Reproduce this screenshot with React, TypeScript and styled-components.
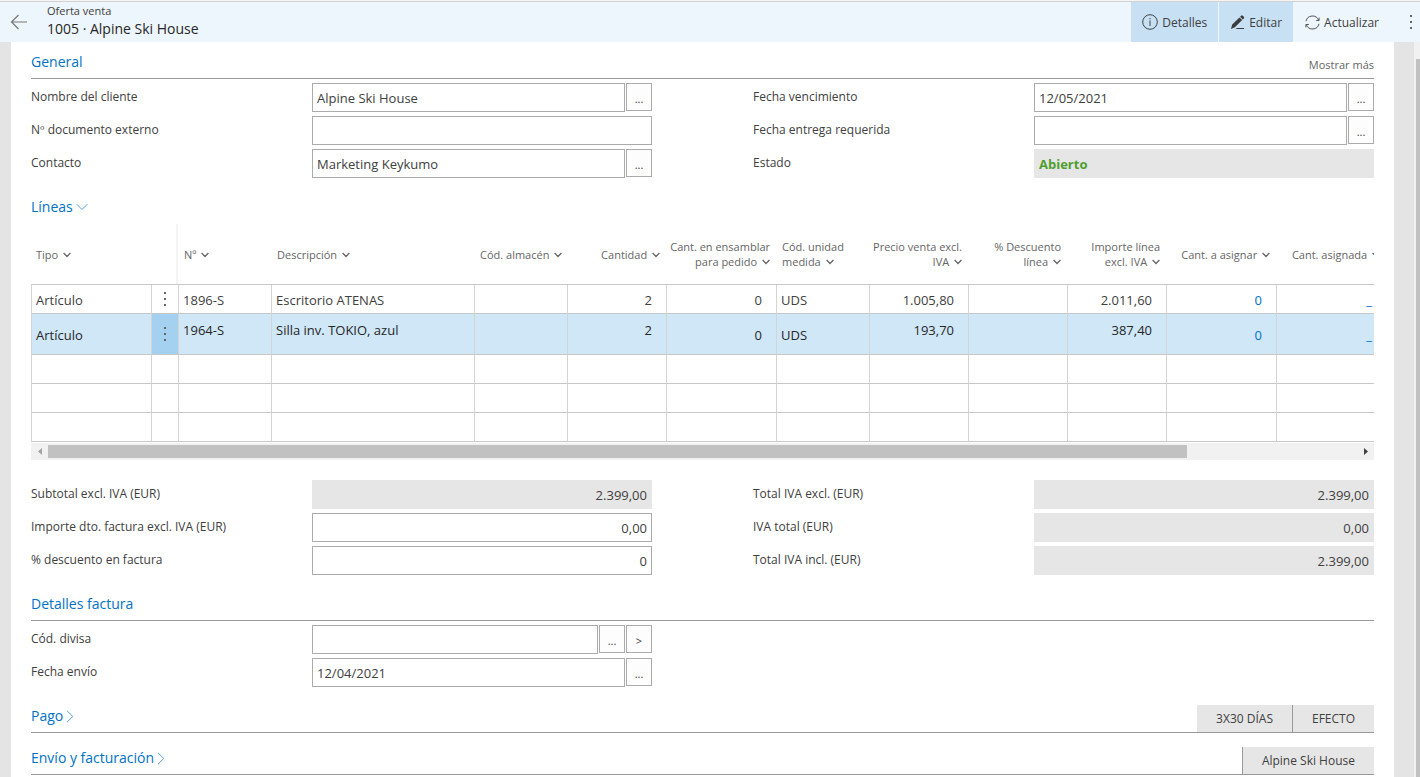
import React, { useId } from "react";
import styled, { createGlobalStyle, css } from "styled-components";

const GlobalStyle = createGlobalStyle`
  *, *::before, *::after { box-sizing: border-box; }
  html, body, #root { height: 100%; }
  body {
    margin: 0;
    overflow: hidden;
    background: #e4e4e4;
    color: #404040;
    font-family: "Open Sans", "Noto Sans", sans-serif;
    font-size: 12px;
    line-height: 16px;
  }
  button, input { font-family: inherit; color: inherit; border-radius: 0; margin: 0; }
  h1, h2, p { margin: 0; font-weight: 400; }
`;

const Screen = styled.div`
  display: flex;
  flex-direction: column;
  height: 100%;
`;

const TopBar = styled.header`
  flex: none;
  display: flex;
  height: 42px;
  padding-top: 1px;
  border-top: 1px solid #f4f4f4;
  background: linear-gradient(#d2d2d2 1px, #eef6fd 1px);
`;

const BackButton = styled.button`
  width: 47px;
  padding: 0 0 0 10px;
  border: 0;
  background: none;
  text-align: left;
  line-height: 0;
`;

const Titles = styled.div`
  flex: 1;
  padding-top: 1px;
`;

const PageKind = styled.p`
  font-size: 11px;
  line-height: 16px;
`;

const PageTitle = styled.h1`
  font-size: 14px;
  line-height: 19px;
  color: #262626;
`;

const ActionButton = styled.button<{ $active?: boolean }>`
  display: flex;
  align-items: center;
  gap: 4px;
  height: 40px;
  padding: 0 11px;
  border: 0;
  border-right: 1px solid #eef6fd;
  background: ${(p) => (p.$active ? "#c7e0f4" : "transparent")};
  font-size: 12px;
`;

const MoreButton = styled.button`
  display: flex;
  align-items: center;
  justify-content: flex-end;
  width: 29px;
  padding: 0 8px 0 0;
  border: 0;
  background: none;
`;

const Workspace = styled.div`
  flex: 1;
  min-height: 0;
  display: flex;
`;

const Sheet = styled.main`
  flex: 1;
  min-width: 0;
  margin: 0 20px 0 11px;
  padding: 0 20px;
  overflow: hidden;
  background: #fff;
`;

const PageScroll = styled.div`
  flex: none;
  width: 6px;
  padding: 17px 0 0 2px;
  background: #f1f1f1;
`;

const PageThumb = styled.div`
  height: 100%;
  background: #c1c1c1;
`;

const SectionHead = styled.div<{ $height: number; $plain?: boolean }>`
  display: flex;
  justify-content: space-between;
  height: ${(p) => p.$height}px;
  border-bottom: ${(p) => (p.$plain ? "0" : "1px solid #999")};
`;

const SectionTitle = styled.h2<{ $top: number }>`
  padding-top: ${(p) => p.$top}px;
  font-size: 14px;
  line-height: 20px;
  color: #0072c6;
`;

const SectionToggle = styled.button`
  display: flex;
  align-items: center;
  gap: 3px;
  padding: 0;
  border: 0;
  background: none;
  font-size: inherit;
  line-height: inherit;
  color: inherit;
`;

const ShowMore = styled.a`
  align-self: flex-end;
  padding-bottom: 5px;
  font-size: 11px;
  line-height: 16px;
  color: #666;
  text-decoration: none;
`;

const Summary = styled.div`
  align-self: flex-end;
  display: flex;
`;

const SummaryTile = styled.span<{ $line?: boolean }>`
  height: 27px;
  padding: 0 19px;
  border-left: ${(p) => (p.$line ? "1px solid #999" : "0")};
  background: #e6e6e6;
  line-height: 27px;
`;

const FieldGrid = styled.div`
  display: grid;
  grid-template-columns: 1fr 1fr;
  column-gap: 101px;
  padding-top: 4px;
`;

const FieldColumn = styled.div`
  display: grid;
  row-gap: 4px;
  align-content: start;
`;

const FieldRow = styled.div`
  display: grid;
  grid-template-columns: 281px 1fr;
  height: 29px;
`;

const FieldLabel = styled.label`
  line-height: 28px;
  white-space: nowrap;
`;

const FieldControls = styled.div`
  display: flex;
  gap: 1px;
  min-width: 0;
`;

const TextBox = styled.input<{ $right?: boolean; $status?: boolean }>`
  flex: 1;
  min-width: 0;
  height: 29px;
  padding: 1px 4px 0;
  border: 1px solid #ababab;
  outline: 0;
  background: #fff;
  font-size: 13px;
  text-align: ${(p) => (p.$right ? "right" : "left")};
  &:read-only {
    border-color: #e6e6e6;
    background: #e6e6e6;
  }
  ${(p) =>
    p.$status &&
    css`
      font-weight: 700;
      color: #509e2f;
    `}
`;

const AssistButton = styled.button`
  flex: none;
  width: 26px;
  height: 28px;
  padding: 3px 0 0;
  border: 1px solid #ababab;
  background: #fdfdfd;
  font-size: 11px;
  line-height: 16px;
`;

const GridFrame = styled.div`
  overflow: hidden;
`;

const LinesTable = styled.table`
  table-layout: fixed;
  width: 1355px;
  border-collapse: separate;
  border-spacing: 0;
`;

const HeadCell = styled.th<{ $right?: boolean; $frozen?: boolean }>`
  height: 61px;
  padding: ${(p) => (p.$right ? "0 6px 0 0" : p.$frozen ? "0 5px" : "0 6px")};
  border-bottom: 1px solid #c8c8c8;
  ${(p) => p.$frozen && "box-shadow: inset -2px 0 #f4f4f4;"}
  font-size: 11px;
  font-weight: 400;
  line-height: 15px;
  color: #666;
  white-space: nowrap;
  text-align: ${(p) => (p.$right ? "right" : "left")};
`;

const HeadButton = styled.button`
  padding: 0;
  border: 0;
  background: none;
  font-size: inherit;
  line-height: inherit;
  text-align: inherit;
  white-space: pre;
`;

const BodyRow = styled.tr<{ $selected?: boolean }>`
  height: ${(p) => (p.$selected ? 41 : 29)}px;
  background: ${(p) => (p.$selected ? "#d0e7f8" : "#fff")};
  color: ${(p) => (p.$selected ? "#262626" : "#404040")};
`;

const BodyCell = styled.td<{ $right?: boolean; $top?: boolean; $menu?: boolean; $on?: boolean }>`
  padding: ${(p) => (p.$menu || p.$top ? 0 : 2)}px ${(p) => (p.$menu ? 0 : p.$right ? 14 : 4)}px 0
    ${(p) => (p.$menu ? 0 : 4)}px;
  border-left: 1px solid #d4d4d4;
  border-bottom: 1px solid #c8c8c8;
  font-size: 13px;
  line-height: 18px;
  white-space: nowrap;
  text-align: ${(p) => (p.$right ? "right" : "left")};
  vertical-align: ${(p) => (p.$top ? "top" : "middle")};
  background: ${(p) => (p.$menu && p.$on ? "#a5d1f1" : "transparent")};
`;

const CellInput = styled.input<{ $right?: boolean }>`
  display: block;
  width: 100%;
  height: 32px;
  padding: 0;
  border: 0;
  outline: 0;
  background: none;
  font-size: 13px;
  text-align: ${(p) => (p.$right ? "right" : "left")};
`;

const RowMenu = styled.button`
  display: flex;
  align-items: center;
  justify-content: center;
  width: 100%;
  height: 24px;
  padding: 0;
  border: 0;
  background: none;
`;

const CellLink = styled.a`
  color: #0072c6;
  text-decoration: none;
`;

const GridScroll = styled.div`
  display: flex;
  align-items: center;
  height: 17px;
  margin-top: 1px;
  background: #f1f1f1;
`;

const ScrollArrow = styled.button`
  flex: none;
  display: flex;
  align-items: center;
  justify-content: center;
  width: 17px;
  height: 17px;
  padding: 0;
  border: 0;
  background: none;
`;

const ScrollLane = styled.div`
  flex: 1;
`;

const GridThumb = styled.div`
  width: 87%;
  height: 13px;
  background: #c1c1c1;
`;

const Spacer = styled.div<{ $size: number }>`
  height: ${(p) => p.$size}px;
`;

const ChevronMark = styled.svg`
  margin-left: 2px;
  vertical-align: 1px;
`;

const HeadChevron = () => (
  <ChevronMark width="8" height="6" viewBox="0 0 8 6" fill="none" stroke="#666" strokeWidth="1.3" aria-hidden="true">
    <path d="M.6 1 4 4.5 7.4 1" />
  </ChevronMark>
);

const DownChevron = () => (
  <svg width="12" height="8" viewBox="0 0 12 8" fill="none" stroke="#5a9fd6" aria-hidden="true">
    <path d="M.5 1 6 6.5 11.5 1" />
  </svg>
);

const RightChevron = () => (
  <svg width="8" height="13" viewBox="0 0 8 13" fill="none" stroke="#5a9fd6" aria-hidden="true">
    <path d="M1 .8 6.8 6.5 1 12.2" />
  </svg>
);

const Dots = () => (
  <svg width="2" height="14" viewBox="0 0 2 14" fill="#666" aria-hidden="true">
    <rect width="2" height="2" />
    <rect y="6" width="2" height="2" />
    <rect y="12" width="2" height="2" />
  </svg>
);

const BackIcon = () => (
  <svg width="17" height="16" viewBox="0 0 17 16" fill="none" stroke="#777" strokeWidth="1.2" aria-hidden="true">
    <path d="M17 8H2M8.5 1 1.5 8l7 7" />
  </svg>
);

const InfoIcon = () => (
  <svg width="16" height="16" viewBox="0 0 16 16" fill="none" stroke="#444" aria-hidden="true">
    <circle cx="8" cy="8" r="7.3" />
    <path d="M8 6.5V12M8 4v1.3" />
  </svg>
);

const PencilIcon = () => (
  <svg width="15" height="15" viewBox="0 0 15 15" fill="#3c3c3c" aria-hidden="true">
    <path d="M11.1.8a1.2 1.2 0 0 1 1.7 0l1 1a1.2 1.2 0 0 1 0 1.700l-1 1-2.700-2.700zM9.500 2.400l2.700 2.700-7.300 7.200-4 1.600 1.300-4.300z" />
    <path d="M7 13h7v1H5.500z" />
  </svg>
);

const RefreshIcon = () => (
  <svg width="15" height="15" viewBox="0 0 15 15" fill="none" stroke="#555" aria-hidden="true">
    <path d="M1 6.200A6.600 6.600 0 0 1 13.600 5.200M14 8.800A6.600 6.600 0 0 1 1.400 9.800" />
    <path d="M14.100 2.600v2.900h-2.900M.9 12.400V9.500h2.900" />
  </svg>
);

type FieldProps = {
  label: string;
  value?: string;
  right?: boolean;
  readOnly?: boolean;
  status?: boolean;
  assists?: string[];
};

function Field({ label, value = "", right, readOnly, status, assists = [] }: FieldProps) {
  const id = useId();
  return (
    <FieldRow>
      <FieldLabel htmlFor={id}>{label}</FieldLabel>
      <FieldControls>
        <TextBox id={id} defaultValue={value} readOnly={readOnly} $right={right} $status={status} />
        {assists.map((mark) => (
          <AssistButton key={mark} type="button" aria-label={`${label} ${mark}`}>
            {mark}
          </AssistButton>
        ))}
      </FieldControls>
    </FieldRow>
  );
}

type Column = { title: string; width: number; right?: boolean; editable?: boolean; link?: boolean };

const columns: Column[] = [
  { title: "Nº", width: 93, editable: true },
  { title: "Descripción", width: 203, editable: true },
  { title: "Cód. almacén", width: 93, editable: true },
  { title: "Cantidad", width: 99, right: true, editable: true },
  { title: "Cant. en ensamblar\npara pedido", width: 110, right: true },
  { title: "Cód. unidad\nmedida", width: 93 },
  { title: "Precio venta excl.\nIVA", width: 99, right: true, editable: true },
  { title: "% Descuento\nlínea", width: 99, right: true, editable: true },
  { title: "Importe línea\nexcl. IVA", width: 99, right: true, editable: true },
  { title: "Cant. a asignar", width: 110, right: true, link: true },
  { title: "Cant. asignada", width: 110, right: true, link: true },
];

const lines = [
  { type: "Artículo", cells: ["1896-S", "Escritorio ATENAS", "", "2", "0", "UDS", "1.005,80", "", "2.011,60", "0", "_"] },
  { type: "Artículo", selected: true, cells: ["1964-S", "Silla inv. TOKIO, azul", "", "2", "0", "UDS", "193,70", "", "387,40", "0", "_"] },
];

const emptyLines = [0, 1, 2];

function Heading({ title }: { title: string }) {
  return (
    <HeadButton type="button">
      {title} <HeadChevron />
    </HeadButton>
  );
}

function Lines() {
  return (
    <>
      <GridFrame>
        <LinesTable>
          <colgroup>
            <col style={{ width: 120 }} />
            <col style={{ width: 27 }} />
            {columns.map((c) => (
              <col key={c.title} style={{ width: c.width }} />
            ))}
          </colgroup>
          <thead>
            <tr>
              <HeadCell colSpan={2} $frozen>
                <Heading title="Tipo" />
              </HeadCell>
              {columns.map((c) => (
                <HeadCell key={c.title} $right={c.right}>
                  <Heading title={c.title} />
                </HeadCell>
              ))}
            </tr>
          </thead>
          <tbody>
            {lines.map((line) => (
              <BodyRow key={line.cells[0]} $selected={line.selected}>
                <BodyCell>{line.type}</BodyCell>
                <BodyCell $menu $on={line.selected}>
                  <RowMenu type="button" aria-label="Más opciones">
                    <Dots />
                  </RowMenu>
                </BodyCell>
                {columns.map((c, i) => {
                  const editing = line.selected && c.editable;
                  return (
                    <BodyCell key={c.title} $right={c.right} $top={editing}>
                      {editing ? (
                        <CellInput defaultValue={line.cells[i]} $right={c.right} aria-label={c.title} />
                      ) : c.link ? (
                        <CellLink href="#">{line.cells[i]}</CellLink>
                      ) : (
                        line.cells[i]
                      )}
                    </BodyCell>
                  );
                })}
              </BodyRow>
            ))}
            {emptyLines.map((n) => (
              <BodyRow key={n}>
                <BodyCell />
                <BodyCell />
                {columns.map((c) => (
                  <BodyCell key={c.title} />
                ))}
              </BodyRow>
            ))}
          </tbody>
        </LinesTable>
      </GridFrame>
      <GridScroll>
        <ScrollArrow type="button" aria-label="Desplazar a la izquierda">
          <svg width="4" height="7" viewBox="0 0 4 7" fill="#a3a3a3"><path d="M4 0v7L0 3.500z" /></svg>
        </ScrollArrow>
        <ScrollLane>
          <GridThumb />
        </ScrollLane>
        <ScrollArrow type="button" aria-label="Desplazar a la derecha">
          <svg width="4" height="7" viewBox="0 0 4 7" fill="#404040"><path d="M0 0v7l4-3.500z" /></svg>
        </ScrollArrow>
      </GridScroll>
    </>
  );
}

export default function App() {
  return (
    <Screen>
      <GlobalStyle />
      <TopBar>
        <BackButton type="button" aria-label="Atrás">
          <BackIcon />
        </BackButton>
        <Titles>
          <PageKind>Oferta venta</PageKind>
          <PageTitle>1005 · Alpine Ski House</PageTitle>
        </Titles>
        <ActionButton type="button" $active>
          <InfoIcon />
          Detalles
        </ActionButton>
        <ActionButton type="button" $active>
          <PencilIcon />
          Editar
        </ActionButton>
        <ActionButton type="button">
          <RefreshIcon />
          Actualizar
        </ActionButton>
        <MoreButton type="button" aria-label="Más">
          <Dots />
        </MoreButton>
      </TopBar>
      <Workspace>
        <Sheet>
          <SectionHead $height={37}>
            <SectionTitle $top={10}>General</SectionTitle>
            <ShowMore href="#">Mostrar más</ShowMore>
          </SectionHead>
          <FieldGrid>
            <FieldColumn>
              <Field label="Nombre del cliente" value="Alpine Ski House" assists={["..."]} />
              <Field label="Nº documento externo" />
              <Field label="Contacto" value="Marketing Keykumo" assists={["..."]} />
            </FieldColumn>
            <FieldColumn>
              <Field label="Fecha vencimiento" value="12/05/2021" assists={["..."]} />
              <Field label="Fecha entrega requerida" assists={["..."]} />
              <Field label="Estado" value="Abierto" readOnly status />
            </FieldColumn>
          </FieldGrid>

          <SectionHead $height={46} $plain>
            <SectionTitle $top={19}>
              <SectionToggle type="button">
                Líneas
                <DownChevron />
              </SectionToggle>
            </SectionTitle>
          </SectionHead>
          <Lines />

          <Spacer $size={16} />
          <FieldGrid>
            <FieldColumn>
              <Field label="Subtotal excl. IVA (EUR)" value="2.399,00" right readOnly />
              <Field label="Importe dto. factura excl. IVA (EUR)" value="0,00" right />
              <Field label="% descuento en factura" value="0" right />
            </FieldColumn>
            <FieldColumn>
              <Field label="Total IVA excl. (EUR)" value="2.399,00" right readOnly />
              <Field label="IVA total (EUR)" value="0,00" right readOnly />
              <Field label="Total IVA incl. (EUR)" value="2.399,00" right readOnly />
            </FieldColumn>
          </FieldGrid>

          <SectionHead $height={46}>
            <SectionTitle $top={19}>Detalles factura</SectionTitle>
          </SectionHead>
          <FieldGrid>
            <FieldColumn>
              <Field label="Cód. divisa" assists={["...", ">"]} />
              <Field label="Fecha envío" value="12/04/2021" assists={["..."]} />
            </FieldColumn>
          </FieldGrid>

          <SectionHead $height={46}>
            <SectionTitle $top={19}>
              <SectionToggle type="button">
                Pago
                <RightChevron />
              </SectionToggle>
            </SectionTitle>
            <Summary>
              <SummaryTile>3X30 DÍAS</SummaryTile>
              <SummaryTile $line>EFECTO</SummaryTile>
            </Summary>
          </SectionHead>
          <SectionHead $height={42}>
            <SectionTitle $top={15}>
              <SectionToggle type="button">
                Envío y facturación
                <RightChevron />
              </SectionToggle>
            </SectionTitle>
            <Summary>
              <SummaryTile $line>Alpine Ski House</SummaryTile>
            </Summary>
          </SectionHead>
        </Sheet>
        <PageScroll>
          <PageThumb />
        </PageScroll>
      </Workspace>
    </Screen>
  );
}
